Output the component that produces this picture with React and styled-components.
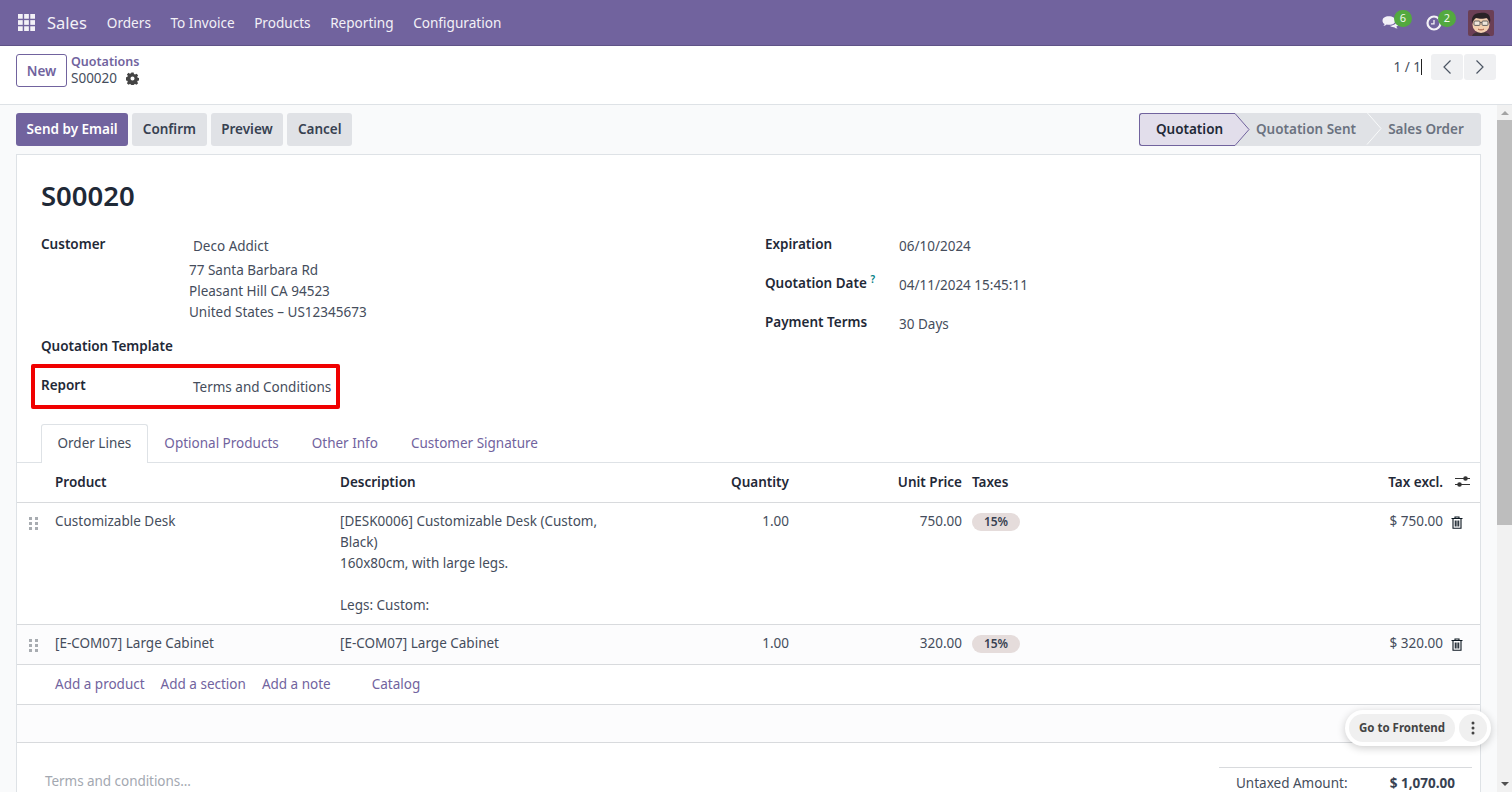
import React from "react";
import styled, { createGlobalStyle } from "styled-components";

const GlobalStyle = createGlobalStyle`
  html, body {
    margin: 0;
    height: 100%;
    overflow: hidden;
  }
  body {
    font-family: "Noto Sans", "Open Sans", sans-serif;
    font-size: 13.5px;
    color: #454d5c;
  }
  * { box-sizing: border-box; }
`;

const purple = "#71639e";
const line = "#d8dadd";

const App = () => (
  <Page>
    <GlobalStyle />
    <NavBar>
      <AppsIcon viewBox="0 0 18 18">
        {[0, 6.5, 13].map((y) =>
          [0, 6.5, 13].map((x) => <rect key={`${x}-${y}`} x={x} y={y} width="5" height="5" fill="#f3f1f7" />)
        )}
      </AppsIcon>
      <Brand>Sales</Brand>
      <NavItem>Orders</NavItem>
      <NavItem>To Invoice</NavItem>
      <NavItem>Products</NavItem>
      <NavItem>Reporting</NavItem>
      <NavItem>Configuration</NavItem>
      <NavRight>
        <Systray>
          <svg width="18" height="15" viewBox="0 1.500 17.500 13">
            <path d="M6.5 2C3 2 .5 3.8.5 6.2c0 1.3.8 2.5 2 3.2-.2.8-.7 1.5-1.3 2 1.300-.1 2.500-.6 3.400-1.400.7.1 1.500.2 2.400.2 3.500 0 6-1.800 6-4s-2.500-4.200-6.500-4.200z" fill="#f3f1f7" />
            <path d="M14.500 6c.1 2.800-3 5-7 5.200 1 .9 2.600 1.400 4.300 1.300.9.800 2 1.300 3.400 1.400-.6-.5-1-1.200-1.200-2 1.300-.7 2.500-1.800 2.500-3.200 0-1.100-.9-2.100-2-2.700z" fill="#f3f1f7" />
          </svg>
          <Badge>6</Badge>
        </Systray>
        <Systray>
          <svg width="16" height="16" viewBox="0 0 16 16">
            <circle cx="8" cy="8" r="6.500" fill="none" stroke="#f3f1f7" strokeWidth="2.200" />
            <path d="M8 5V8.800H5" fill="none" stroke="#f3f1f7" strokeWidth="1.300" />
          </svg>
          <Badge>2</Badge>
        </Systray>
        <Avatar viewBox="0 0 26 26">
          <rect width="26" height="26" rx="2" fill="#6b3f55" />
          <path d="M4 26c1-3 4-4 9-4s8 1 9 4z" fill="#3d3038" />
          <ellipse cx="13" cy="14.500" rx="8.500" ry="8.500" fill="#f3cfb0" />
          <path d="M4 13C3 7 6 3 12 3c4-1 10 0 10 5 .6 1.500.4 3-.2 5-.6-2-1.400-4-2.800-5-3 1-8 1-11 0-2 1-3 3-4 5z" fill="#2a2226" />
          <rect x="6" y="11" width="6" height="4.400" rx="1" fill="#efe6dc" stroke="#55504f" strokeWidth="0.900" />
          <rect x="14" y="11" width="6" height="4.400" rx="1" fill="#efe6dc" stroke="#55504f" strokeWidth="0.900" />
          <path d="M12 12.500h2" stroke="#55504f" strokeWidth="0.800" />
          <path d="M10 19c1.500 1.200 4.500 1.200 6 0" fill="none" stroke="#a4553f" strokeWidth="1" />
        </Avatar>
      </NavRight>
    </NavBar>

    <ControlPanel>
      <NewButton>New</NewButton>
      <Breadcrumb>
        <CrumbLink>Quotations</CrumbLink>
        <CrumbCurrent>
          S00020
          <svg width="13" height="13" viewBox="0 0 16 16">
            <path
              fill="#444"
              fillRule="evenodd"
              d="M6.600.5h2.800l.4 2 1.400.6 1.700-1.100 2 2-1.100 1.700.6 1.400 2 .4v2.800l-2 .4-.6 1.400 1.100 1.700-2 2-1.700-1.100-1.400.6-.4 2H6.600l-.4-2-1.400-.6-1.700 1.100-2-2 1.100-1.700-.6-1.400-2-.4V6.500l2-.4.6-1.400L1.100 3l2-2 1.700 1.100 1.400-.6zM8 5.500a2.500 2.500 0 1 0 0 5 2.500 2.500 0 0 0 0-5z"
            />
          </svg>
        </CrumbCurrent>
      </Breadcrumb>
      <Pager>
        <PagerText>1 / 1</PagerText>
        <Caret />
        <PagerButtons>
          <PagerButton>
            <svg width="10" height="16" viewBox="0 0 10 16"><path d="M8.500 1.500 2 8l6.500 6.500" fill="none" stroke="#4b5563" strokeWidth="1.200" /></svg>
          </PagerButton>
          <PagerButton>
            <svg width="10" height="16" viewBox="0 0 10 16"><path d="M1.500 1.500 8 8l-6.500 6.500" fill="none" stroke="#4b5563" strokeWidth="1.200" /></svg>
          </PagerButton>
        </PagerButtons>
      </Pager>
    </ControlPanel>

    <Scroller>
      <Content>
        <ActionBar>
          <ActionButton $primary>Send by Email</ActionButton>
          <ActionButton>Confirm</ActionButton>
          <ActionButton>Preview</ActionButton>
          <ActionButton>Cancel</ActionButton>
          <StatusBar>
            <StatusCurrent>
              Quotation
              <Chevron viewBox="0 0 15 33">
                <path d="M0 .5 14 16.500 0 32.500" fill="#e2deeb" stroke={purple} strokeWidth="1" />
              </Chevron>
            </StatusCurrent>
            <StatusStep $width={132} $pad={10}>
              Quotation Sent
              <Chevron viewBox="0 0 15 33">
                <path d="M0 .5 14 16.500 0 32.500" fill="none" stroke="#f9fafb" strokeWidth="1" />
              </Chevron>
            </StatusStep>
            <StatusStep $width={114} $pad={4}>Sales Order</StatusStep>
          </StatusBar>
        </ActionBar>

        <Sheet>
          <Title>S00020</Title>
          <FormGrid>
            <FormColumn>
              <Field>
                <FieldLabel>Customer</FieldLabel>
                <CustomerValue>
                  <CustomerName>Deco Addict</CustomerName>
                  <AddressLine>77 Santa Barbara Rd</AddressLine>
                  <AddressLine>Pleasant Hill CA 94523</AddressLine>
                  <AddressLine>United States – US12345673</AddressLine>
                </CustomerValue>
              </Field>
              <TemplateLabel>Quotation Template</TemplateLabel>
              <ReportField>
                <FieldLabel>Report</FieldLabel>
                <ReportValue>Terms and Conditions</ReportValue>
                <RedBox />
              </ReportField>
            </FormColumn>
            <FormColumn>
              <DateField>
                <FieldLabel>Expiration</FieldLabel>
                <DateValue>06/10/2024</DateValue>
              </DateField>
              <DateField>
                <FieldLabel>
                  Quotation Date <Help>?</Help>
                </FieldLabel>
                <DateValue>04/11/2024 15:45:11</DateValue>
              </DateField>
              <DateField>
                <FieldLabel>Payment Terms</FieldLabel>
                <DateValue>30 Days</DateValue>
              </DateField>
            </FormColumn>
          </FormGrid>

          <Tabs>
            <Tab $active>Order Lines</Tab>
            <Tab>Optional Products</Tab>
            <Tab>Other Info</Tab>
            <Tab>Customer Signature</Tab>
          </Tabs>

          <HeadRow>
            <span />
            <HeadCell>Product</HeadCell>
            <HeadCell>Description</HeadCell>
            <HeadCell $right>Quantity</HeadCell>
            <HeadCell $right>Unit Price</HeadCell>
            <TaxesHead>Taxes</TaxesHead>
            <HeadCell $right>Tax excl.</HeadCell>
            <IconCell>
              <svg width="15" height="11" viewBox="0 0 15 11">
                <path d="M0 2.500h15M0 8.500h15" stroke="#333" strokeWidth="1" />
                <circle cx="10.500" cy="2.500" r="2.300" fill="#333" />
                <circle cx="4.500" cy="8.500" r="2.300" fill="#333" />
              </svg>
            </IconCell>
          </HeadRow>

          <LineRow $height={121}>
            <Handle />
            <Cell>Customizable Desk</Cell>
            <Cell>
              [DESK0006] Customizable Desk (Custom,
              <br />
              Black)
              <br />
              160x80cm, with large legs.
              <br />
              <br />
              Legs: Custom:
            </Cell>
            <Cell $right>1.00</Cell>
            <Cell $right>750.00</Cell>
            <TaxCell><TaxTag>15%</TaxTag></TaxCell>
            <Cell $right>$ 750.00</Cell>
            <TrashCell><Trash /></TrashCell>
          </LineRow>

          <LineRow $height={39} $shade>
            <Handle />
            <Cell>[E-COM07] Large Cabinet</Cell>
            <Cell>[E-COM07] Large Cabinet</Cell>
            <Cell $right>1.00</Cell>
            <Cell $right>320.00</Cell>
            <TaxCell><TaxTag>15%</TaxTag></TaxCell>
            <Cell $right>$ 320.00</Cell>
            <TrashCell><Trash /></TrashCell>
          </LineRow>

          <AddRow>
            <AddLink>Add a product</AddLink>
            <AddLink>Add a section</AddLink>
            <AddLink>Add a note</AddLink>
            <CatalogLink>Catalog</CatalogLink>
          </AddRow>
          <EmptyRow />

          <FooterRow>
            <TermsText>Terms and conditions...</TermsText>
            <Totals>
              <span>Untaxed Amount:</span>
              <strong>$ 1,070.00</strong>
            </Totals>
          </FooterRow>
        </Sheet>
      </Content>
      <ScrollTrack>
        <ArrowUp />
        <Thumb />
        <ArrowDown />
      </ScrollTrack>
    </Scroller>

    <Floating>
      <FrontendButton>Go to Frontend</FrontendButton>
      <DotsButton>
        <svg width="4" height="14" viewBox="0 0 4 14">
          <circle cx="2" cy="2" r="1.500" fill="#444" />
          <circle cx="2" cy="7" r="1.500" fill="#444" />
          <circle cx="2" cy="12" r="1.500" fill="#444" />
        </svg>
      </DotsButton>
    </Floating>
  </Page>
);

const Handle = () => (
  <HandleCell>
    <svg width="9" height="13" viewBox="0 0 9 13">
      {[0, 5, 10].map((y) => [0, 6].map((x) => <rect key={`${x}-${y}`} x={x} y={y} width="3" height="3" fill="#a8acb1" />))}
    </svg>
  </HandleCell>
);

const Trash = () => (
  <svg width="12" height="13" viewBox="0 0 12 13">
    <path d="M0.500 2.500h11M4 2.500V1h4v1.500M2 2.500V12.300h8V2.500M4.300 4.500v6M6 4.500v6M7.700 4.500v6" fill="none" stroke="#0b1620" strokeWidth="1.100" />
  </svg>
);

const Page = styled.div`
  position: relative;
  height: 792px;
  width: 1512px;
  overflow: hidden;
  display: flex;
  flex-direction: column;
  background: #f9fafb;
`;
const NavBar = styled.div`
  height: 46px;
  flex: none;
  display: flex;
  align-items: center;
  background: ${purple};
  border-bottom: 1px solid #5f5387;
  padding: 0 18px 0 18px;
  color: #f3f1f7;
`;
const AppsIcon = styled.svg`
  width: 17px;
  height: 17px;
`;
const Brand = styled.div`
  font-size: 16.5px;
  margin: 0 20px 0 12px;
`;
const NavItem = styled.div`
  font-size: 13.6px;
  margin-right: 19.500px;
`;
const NavRight = styled.div`
  margin-left: auto;
  display: flex;
  align-items: center;
`;
const Systray = styled.div`
  position: relative;
  display: flex;
  align-items: center;
  width: 18px;
  height: 18px;
  margin-right: 26px;
`;
const Badge = styled.span`
  position: absolute;
  left: 12px;
  top: -4px;
  width: 18px;
  height: 17px;
  border-radius: 9px;
  background: #53a93f;
  color: #f3f8ee;
  font-size: 11px;
  text-align: center;
  line-height: 15px;
`;
const Avatar = styled.svg`
  width: 26px;
  height: 26px;
  margin-left: -2px;
`;
const ControlPanel = styled.div`
  height: 59px;
  flex: none;
  display: flex;
  align-items: flex-start;
  background: #fff;
  border-bottom: 1px solid #dee2e6;
  padding: 8px 16px 0 16px;
`;
const NewButton = styled.button`
  width: 51px;
  height: 33px;
  background: #fff;
  border: 1px solid ${purple};
  border-radius: 3px;
  color: ${purple};
  font: 600 13.500px "Noto Sans", sans-serif;
  padding: 0;
`;
const Breadcrumb = styled.div`
  margin-left: 4px;
  line-height: 16px;
`;
const CrumbLink = styled.div`
  color: ${purple};
  font-size: 12.500px;
  font-weight: 600;
`;
const CrumbCurrent = styled.div`
  display: flex;
  align-items: center;
  gap: 9px;
  font-size: 13.500px;
`;
const Pager = styled.div`
  margin-left: auto;
  display: flex;
  align-items: center;
  height: 26px;
`;
const PagerText = styled.span`
  font-size: 13.500px;
`;
const Caret = styled.span`
  width: 1px;
  height: 16px;
  background: #222;
  margin: 0 9px 0 0;
`;
const PagerButtons = styled.div`
  display: flex;
  gap: 1px;
`;
const PagerButton = styled.div`
  width: 32px;
  height: 26px;
  display: flex;
  align-items: center;
  justify-content: center;
  background: #eff0f2;
  border-radius: 3px;
`;
const Scroller = styled.div`
  flex: 1;
  min-height: 0;
  display: flex;
  overflow: hidden;
`;
const Content = styled.div`
  flex: 1;
  min-width: 0;
  padding: 8px 16px 0;
`;
const ActionBar = styled.div`
  display: flex;
  gap: 4px;
  margin-bottom: 8px;
`;
const ActionButton = styled.button`
  height: 33px;
  padding: 0 10.600px 2px;
  border: none;
  border-radius: 3px;
  background: ${(p) => (p.$primary ? purple : "#e0e2e6")};
  color: ${(p) => (p.$primary ? "#fff" : "#374151")};
  font: 600 13.500px "Noto Sans", sans-serif;
`;
const StatusBar = styled.div`
  margin-left: auto;
  display: flex;
  height: 33px;
  background: #e0e2e6;
  border-radius: 3px;
  font-weight: 600;
`;
const StatusCurrent = styled.div`
  position: relative;
  width: 96px;
  display: flex;
  align-items: center;
  justify-content: center;
  padding: 0 0 2px 4px;
  background: #e2deeb;
  border: 1px solid ${purple};
  border-right: none;
  border-radius: 3px 0 0 3px;
  color: #1f2937;
`;
const StatusStep = styled.div`
  position: relative;
  display: flex;
  align-items: center;
  justify-content: center;
  padding: 0 0 2px ${(p) => p.$pad}px;
  width: ${(p) => p.$width}px;
  color: #6b7280;
`;
const Chevron = styled.svg`
  position: absolute;
  z-index: 1;
  top: -1px;
  left: 100%;
  width: 15px;
  height: 33px;
  overflow: visible;
`;
const Sheet = styled.div`
  background: #fff;
  border: 1px solid #dee2e6;
  height: 700px;
  overflow: hidden;
`;
const Title = styled.div`
  font-size: 27.500px;
  font-weight: 600;
  color: #1f2937;
  line-height: 36px;
  padding: 23px 24px 0;
`;
const FormGrid = styled.div`
  display: grid;
  grid-template-columns: 724px 1fr;
  padding: 20px 24px 0;
  height: 210px;
`;
const FormColumn = styled.div`
  display: flex;
  flex-direction: column;
`;
const Field = styled.div`
  display: flex;
  align-items: flex-start;
`;
const FieldLabel = styled.div`
  width: 134px;
  flex: none;
  font-weight: 600;
  color: #1f2937;
  line-height: 20px;
  white-space: nowrap;
`;
const CustomerValue = styled.div`
  padding-left: 14px;
`;
const CustomerName = styled.div`
  line-height: 21px;
  padding: 2px 0 0 4px;
  margin-bottom: 3px;
`;
const AddressLine = styled.div`
  line-height: 21px;
`;
const TemplateLabel = styled(FieldLabel)`
  margin-top: 13px;
  width: 200px;
`;
const ReportField = styled.div`
  position: relative;
  display: flex;
  margin-top: 19px;
`;
const ReportValue = styled.div`
  margin: 2px 0 0 18px;
  line-height: 20px;
`;
const RedBox = styled.div`
  position: absolute;
  left: -10px;
  top: -11px;
  width: 309px;
  height: 45px;
  border: 4px solid #f00000;
  border-radius: 2px;
`;
const DateField = styled.div`
  display: flex;
  height: 39px;
`;
const DateValue = styled.div`
  line-height: 20px;
  margin-top: 2px;
`;
const Help = styled.sup`
  color: #017e84;
  font-size: 10px;
  line-height: 0;
`;
const Tabs = styled.div`
  display: flex;
  height: 39px;
  padding-left: 24px;
  border-bottom: 1px solid #dee2e6;
`;
const Tab = styled.div`
  height: 39px;
  padding: 0 15.500px 2px;
  display: flex;
  align-items: center;
  color: ${(p) => (p.$active ? "#454d5c" : purple)};
  background: ${(p) => (p.$active ? "#fff" : "transparent")};
  border: 1px solid ${(p) => (p.$active ? "#dee2e6" : "transparent")};
  border-bottom: none;
  border-radius: 3px 3px 0 0;
`;
const tableCols = "38px 285px 291px 158px 173px 1fr 92px 37px";
const HeadRow = styled.div`
  display: grid;
  grid-template-columns: ${tableCols};
  height: 40px;
  padding-bottom: 2px;
  border-bottom: 1px solid ${line};
  align-items: center;
`;
const HeadCell = styled.div`
  font-weight: 600;
  color: #1f2937;
  text-align: ${(p) => (p.$right ? "right" : "left")};
`;
const TaxesHead = styled(HeadCell)`
  padding-left: 10px;
`;
const IconCell = styled.div`
  display: flex;
  justify-content: center;
  padding-left: 1px;
`;
const TrashCell = styled(IconCell)`
  padding: 5px 9px 0 0;
  align-items: flex-start;
`;
const LineRow = styled.div`
  display: grid;
  grid-template-columns: ${tableCols};
  height: ${(p) => p.$height + 1}px;
  padding-top: 8px;
  background: ${(p) => (p.$shade ? "#fcfcfd" : "#fff")};
  border-bottom: 1px solid ${line};
  line-height: 21px;
`;
const HandleCell = styled.div`
  padding: 4px 0 0 12px;
`;
const Cell = styled.div`
  text-align: ${(p) => (p.$right ? "right" : "left")};
  white-space: nowrap;
`;
const TaxCell = styled.div`
  padding-left: 10px;
`;
const TaxTag = styled.span`
  display: block;
  width: 48px;
  height: 18px;
  margin-top: 2px;
  border-radius: 9px;
  background: #e5dcdb;
  color: #374151;
  font-size: 12px;
  font-weight: 600;
  line-height: 18px;
  text-align: center;
`;
const AddRow = styled.div`
  height: 40px;
  display: flex;
  align-items: center;
  gap: 16px;
  padding: 0 0 2px 38px;
  border-bottom: 1px solid ${line};
`;
const AddLink = styled.span`
  color: ${purple};
`;
const CatalogLink = styled(AddLink)`
  margin-left: 25px;
`;
const EmptyRow = styled.div`
  height: 38px;
  background: #fcfcfd;
  border-bottom: 1px solid ${line};
`;
const FooterRow = styled.div`
  display: flex;
  justify-content: space-between;
  padding: 24px 8px 0 28px;
`;
const TermsText = styled.div`
  color: #a3a8b1;
  padding-top: 5px;
  letter-spacing: -0.05px;
`;
const Totals = styled.div`
  width: 253px;
  display: flex;
  justify-content: space-between;
  border-top: 1px solid ${line};
  padding: 5px 17px 0 17px;
  line-height: 20px;
  strong { color: #374151; font-weight: 700; }
`;
const ScrollTrack = styled.div`
  width: 15px;
  flex: none;
  position: relative;
  background: #f1f1f1;
  display: flex;
  flex-direction: column;
  align-items: center;
`;
const ArrowUp = styled.div`
  margin-top: 6px;
  border: 4px solid transparent;
  border-bottom: 4px solid #a3a3a3;
  border-top: none;
`;
const Thumb = styled.div`
  width: 15px;
  height: 405px;
  margin-top: 5px;
  background: #bdbdbd;
`;
const ArrowDown = styled.div`
  margin-top: auto;
  margin-bottom: 6px;
  border: 4px solid transparent;
  border-top: 4px solid #505050;
  border-bottom: none;
`;
const Floating = styled.div`
  position: absolute;
  left: 1345px;
  top: 710px;
  width: 146px;
  height: 36px;
  display: flex;
  align-items: center;
  gap: 4px;
  padding: 0 4px;
  background: #fff;
  border-radius: 18px;
  box-shadow: 0 2px 8px rgba(0, 0, 0, 0.2);
`;
const FrontendButton = styled.div`
  width: 106px;
  height: 28px;
  border-radius: 14px;
  background: #f0f0f0;
  color: #444;
  font-size: 11.500px;
  font-weight: 700;
  line-height: 27px;
  text-align: center;
`;
const DotsButton = styled.div`
  width: 28px;
  height: 28px;
  border-radius: 50%;
  background: #f0f0f0;
  display: flex;
  align-items: center;
  justify-content: center;
`;

export default App;
